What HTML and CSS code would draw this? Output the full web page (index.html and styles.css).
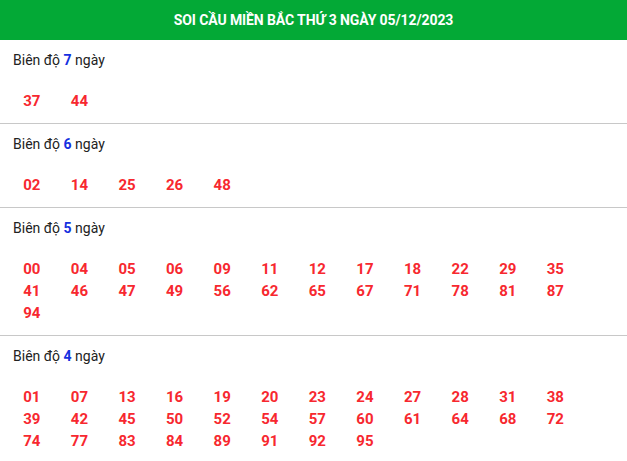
FILE: index.html
```html
<!DOCTYPE html>
<html lang="vi">
<head>
    <meta charset="UTF-8">
    <meta name="viewport" content="width=device-width, initial-scale=1.0">
    <title>Soi cầu miền Bắc</title>
    <link rel="stylesheet" href="styles.css">
</head>
<body>
    <div class="box">
        <div class="box-title">SOI CẦU MIỀN BẮC THỨ 3 NGÀY 05/12/2023</div>

        <div class="group">
            <div class="group-label">Biên độ <b>7</b> ngày</div>
            <div class="nums">
                <span>37</span><span>44</span>
            </div>
        </div>

        <div class="group">
            <div class="group-label">Biên độ <b>6</b> ngày</div>
            <div class="nums">
                <span>02</span><span>14</span><span>25</span><span>26</span><span>48</span>
            </div>
        </div>

        <div class="group">
            <div class="group-label">Biên độ <b>5</b> ngày</div>
            <div class="nums">
                <span>00</span><span>04</span><span>05</span><span>06</span><span>09</span><span>11</span>
                <span>12</span><span>17</span><span>18</span><span>22</span><span>29</span><span>35</span>
                <span>41</span><span>46</span><span>47</span><span>49</span><span>56</span><span>62</span>
                <span>65</span><span>67</span><span>71</span><span>78</span><span>81</span><span>87</span>
                <span>94</span>
            </div>
        </div>

        <div class="group">
            <div class="group-label">Biên độ <b>4</b> ngày</div>
            <div class="nums">
                <span>01</span><span>07</span><span>13</span><span>16</span><span>19</span><span>20</span>
                <span>23</span><span>24</span><span>27</span><span>28</span><span>31</span><span>38</span>
                <span>39</span><span>42</span><span>45</span><span>50</span><span>52</span><span>54</span>
                <span>57</span><span>60</span><span>61</span><span>64</span><span>68</span><span>72</span>
                <span>74</span><span>77</span><span>83</span><span>84</span><span>89</span><span>91</span>
                <span>92</span><span>95</span>
            </div>
        </div>
    </div>
</body>
</html>
```

FILE: styles.css
```css
* {
    box-sizing: border-box;
}

body {
    margin: 0;
    background: #fff;
    font-family: Roboto, "Liberation Sans", Arial, sans-serif;
    color: #222;
}

.box {
    width: 627px;
}

.box-title {
    height: 40px;
    background-color: #03a936;
    color: #fff;
    display: flex;
    justify-content: center;
    align-items: center;
    font-size: 14px;
    font-weight: bold;
    letter-spacing: -0.1px;
}

.group {
    padding: 10px 0 11px;
    border-bottom: 1px solid #c8c8c8;
}

.group:last-child {
    border-bottom: none;
}

.group-label {
    padding-left: 13px;
    font-size: 14px;
    line-height: 20px;
}

.group-label b {
    color: #1530e0;
}

.nums {
    margin-top: 20px;
    padding-left: 8px;
    display: grid;
    grid-template-columns: repeat(12, 47.6px);
}

.nums span {
    text-align: center;
    font-size: 15px;
    font-weight: bold;
    line-height: 22px;
    color: #f7282f;
}
```
